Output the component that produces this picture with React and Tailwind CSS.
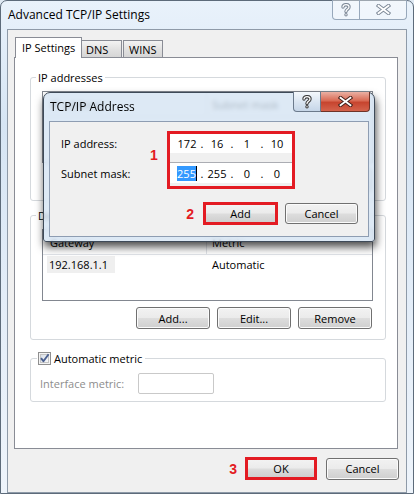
import React from "react";

const btnBg =
  "bg-[linear-gradient(180deg,#f2f2f2_0%,#ebebeb_48%,#dddddd_52%,#cfcfcf_100%)]";

function Btn({ children, className = "" }) {
  return (
    <div
      className={
        "flex items-center justify-center rounded-[3px] border border-[#707070] shadow-[inset_0_0_0_1px_#fbfbfb] " +
        btnBg +
        " " +
        className
      }
    >
      {children}
    </div>
  );
}

function RedBtn({ children, className = "" }) {
  return (
    <div
      className={
        "flex items-center justify-center border-[3px] border-[#e31b23] " +
        btnBg +
        " " +
        className
      }
    >
      {children}
    </div>
  );
}

function QGlyph({ dark }) {
  const outer = dark ? "#3b3b3b" : "#7e8a98";
  return (
    <svg width="10" height="14" viewBox="0 0 10 14">
      <path
        d="M2 4 C2 0.9 8 0.9 8 4 C8 6.4 5 6.2 5 8.6"
        fill="none"
        stroke={outer}
        strokeWidth="3.4"
        strokeLinecap="round"
      />
      <circle cx="5" cy="11.8" r="1.7" fill={outer} />
      <path
        d="M2 4 C2 0.9 8 0.9 8 4 C8 6.4 5 6.2 5 8.6"
        fill="none"
        stroke="#ffffff"
        strokeWidth="1.3"
        strokeLinecap="round"
      />
      <circle cx="5" cy="11.8" r="0.7" fill="#ffffff" />
    </svg>
  );
}

function XGlyph({ dark }) {
  const outer = dark ? "#43201a" : "#7e8a98";
  return (
    <svg width="15" height="11" viewBox="0 0 15 11">
      <path
        d="M2.5 1.8 L12.5 9.2 M12.5 1.8 L2.5 9.2"
        fill="none"
        stroke={outer}
        strokeWidth="3.8"
        strokeLinecap="square"
      />
      <path
        d="M2.5 1.8 L12.5 9.2 M12.5 1.8 L2.5 9.2"
        fill="none"
        stroke="#ffffff"
        strokeWidth="1.8"
        strokeLinecap="square"
      />
    </svg>
  );
}

function ListBox({ c1, c2, rows }) {
  return (
    <div className="ml-[11px] mt-[6px] flex h-[72px] w-[331px] flex-col border border-[#828790] bg-white">
      <div className="flex h-[25px] shrink-0 border-b border-[#e0e3e8]">
        <div className="flex w-[164px] items-center border-r border-[#e0e3e8] pl-[7px]">
          {c1}
        </div>
        <div className="flex items-center pl-[5px]">{c2}</div>
      </div>
      {rows}
    </div>
  );
}

function ButtonsRow() {
  return (
    <div className="mt-[6px] flex justify-end gap-[7px] pr-[13px]">
      <Btn className="h-[22px] w-[74px]">Add...</Btn>
      <Btn className="h-[22px] w-[74px]">Edit...</Btn>
      <Btn className="h-[22px] w-[74px]">Remove</Btn>
    </div>
  );
}

function Octets({ vals, selectFirst }) {
  return (
    <>
      {vals.map((v, i) => (
        <React.Fragment key={i}>
          {i > 0 && <span className="flex w-[6px] justify-center">.</span>}
          <span className="flex w-[24px] justify-center">
            {selectFirst && i === 0 ? (
              <span className="border-r border-black bg-[#3399ff] leading-[15px] text-white">
                {v}
              </span>
            ) : (
              v
            )}
          </span>
        </React.Fragment>
      ))}
    </>
  );
}

export default function App() {
  return (
    <div className="relative h-[494px] w-[414px] overflow-hidden bg-[#dfe9f3] font-['Open_Sans',sans-serif] text-[11px] leading-[15px] text-black">
      {/* Outer window */}
      <div className="flex h-[494px] w-[414px] flex-col rounded-t-[7px] border border-[#5d6b7a] bg-[linear-gradient(180deg,#e9f2fb_0%,#d6e5f4_25%,#e3edf8_60%,#eef4fb_100%)]">
        {/* title bar */}
        <div className="flex h-[28px] shrink-0">
          <div className="pl-[7px] pt-[6px] text-[12px] leading-[16px]">
            Advanced TCP/IP Settings
          </div>
          <div className="-mt-px ml-auto mr-[6px] flex h-[20px]">
            <div className="flex w-[28px] items-center justify-center rounded-bl-[4px] border border-t-0 border-[#97a8bb] bg-white/40">
              <QGlyph />
            </div>
            <div className="flex w-[47px] items-center justify-center rounded-br-[4px] border border-l-0 border-t-0 border-[#97a8bb] bg-white/40">
              <XGlyph />
            </div>
          </div>
        </div>

        {/* client */}
        <div className="mx-[6px] flex flex-1 flex-col border border-[#8e9aa8] bg-[#f0f0f0]">
          {/* tabs */}
          <div className="ml-[7px] mt-[7px] flex h-[20px] shrink-0 items-end">
            <div className="relative z-10 -mb-px flex h-[21px] w-[67px] items-start border border-b-0 border-[#898c95] bg-white pl-[6px] pt-[2px]">
              IP Settings
            </div>
            <div className="flex h-[17px] w-[40px] items-center border border-b-0 border-l-0 border-[#898c95] bg-[linear-gradient(180deg,#f3f3f3,#e2e2e2_50%,#d6d6d6)] pl-[4px]">
              DNS
            </div>
            <div className="ml-px flex h-[17px] w-[40px] items-center border border-b-0 border-[#898c95] bg-[linear-gradient(180deg,#f3f3f3,#e2e2e2_50%,#d6d6d6)] pl-[5px]">
              WINS
            </div>
          </div>

          {/* tab panel */}
          <div className="ml-[6px] flex h-[392px] w-[384px] shrink-0 flex-col border border-[#898c95] bg-white pl-[15px]">
            {/* group 1 */}
            <div className="mt-[19px] flex h-[124px] w-[356px] flex-col rounded-[3px] border border-[#d5d9dd]">
              <div className="-mt-[8px] ml-[5px] h-[15px] w-fit bg-white px-[2px]">
                IP addresses
              </div>
              <ListBox c1="IP address" c2="Subnet mask" rows={null} />
              <ButtonsRow />
            </div>

            {/* group 2 */}
            <div className="mt-[14px] flex h-[125px] w-[356px] flex-col rounded-[3px] border border-[#d5d9dd]">
              <div className="-mt-[8px] ml-[5px] h-[15px] w-fit bg-white px-[2px]">
                Default gateways:
              </div>
              <ListBox
                c1="Gateway"
                c2="Metric"
                rows={
                  <div className="mt-[1px] flex h-[17px] items-center">
                    <div className="w-[165px] pl-[4px]">
                      <span className="inline-block w-[68px] bg-[#efefef] pl-[2px] leading-[17px]">
                        192.168.1.1
                      </span>
                    </div>
                    <div className="pl-[4px]">Automatic</div>
                  </div>
                }
              />
              <ButtonsRow />
            </div>

            {/* group 3 */}
            <div className="mt-[18px] flex h-[44px] w-[356px] flex-col rounded-[3px] border border-[#d5d9dd]">
              <div className="-mt-[8px] ml-[6px] flex h-[15px] w-fit items-center gap-[3px] bg-white px-[1px] pr-[3px]">
                <svg width="13" height="13" viewBox="0 0 13 13">
                  <defs>
                    <linearGradient id="cb" x1="0" y1="0" x2="1" y2="1">
                      <stop offset="0" stopColor="#d6dde6" />
                      <stop offset="1" stopColor="#fbfbfb" />
                    </linearGradient>
                  </defs>
                  <rect x="0.5" y="0.5" width="12" height="12" fill="#f4f4f4" stroke="#8f8f8f" />
                  <rect x="2.5" y="2.5" width="8" height="8" fill="url(#cb)" stroke="#c4c4c4" />
                  <path
                    d="M3 6.2 L5.4 9.2 L10.6 2.2"
                    fill="none"
                    stroke="#4a5f8f"
                    strokeWidth="1.9"
                    strokeLinejoin="round"
                  />
                </svg>
                <span>Automatic metric</span>
              </div>
              <div className="mt-[7px] flex h-[21px] items-center pl-[9px]">
                <span className="w-[98px] text-[#8d8d8d]">Interface metric:</span>
                <div className="h-[21px] w-[76px] rounded-[2px] border border-[#c9c9c9] bg-white" />
              </div>
            </div>
          </div>

          {/* bottom buttons */}
          <div className="mt-[8px] flex items-center justify-end pr-[7px]">
            <div className="mr-[8px] font-['Liberation_Sans',sans-serif] text-[14px] font-bold leading-[16px] text-[#e31b23]">
              3
            </div>
            <RedBtn className="h-[23px] w-[72px]">OK</RedBtn>
            <Btn className="ml-[9px] h-[22px] w-[73px]">Cancel</Btn>
          </div>
        </div>
      </div>

      {/* TCP/IP Address dialog */}
      <div className="absolute left-[43px] top-[92px] flex h-[150px] w-[332px] flex-col rounded-b-[3px] rounded-t-[7px] border border-[#3e4a58] bg-[#d5e3f2]/80 shadow-[1px_5px_9px_rgba(0,0,0,0.7)] backdrop-blur-[2px]">
        <div className="flex h-[28px] shrink-0">
          <div className="pl-[6px] pt-[6px] text-[12px] leading-[16px]">TCP/IP Address</div>
          <div className="-mt-px ml-auto mr-[4px] flex h-[20px]">
            <div className="flex w-[28px] items-center justify-center rounded-bl-[4px] border border-t-0 border-[#6b7a8c] bg-[linear-gradient(180deg,#f4f8fc,#dbe6f2_50%,#c6d6e8)]">
              <QGlyph dark />
            </div>
            <div className="flex w-[49px] items-center justify-center rounded-br-[4px] border border-l-0 border-t-0 border-[#6e3328] bg-[linear-gradient(180deg,#eab0a3_0%,#d96b55_45%,#c7452f_55%,#d4634c_100%)]">
              <XGlyph dark />
            </div>
          </div>
        </div>
        <div className="mx-[5px] mb-[4px] flex-1 border border-[#8e9db2] bg-[#f0f0f0]">
          <div className="ml-[11px] mt-[9px] flex">
            <div className="flex h-[58px] w-[89px] flex-col">
              <div className="mt-[3px] h-[20px] leading-[20px]">IP address:</div>
              <div className="mt-[10px] h-[20px] leading-[20px]">Subnet mask:</div>
            </div>
            <div className="w-[17px] pt-[16px] font-['Liberation_Sans',sans-serif] text-[14px] font-bold leading-[16px] text-[#e31b23]">
              1
            </div>
            <div className="flex h-[58px] w-[128px] flex-col border-[3px] border-[#e31b23] bg-[#f0f0f0]">
              <div className="flex h-[19px] items-center bg-white pl-[5px]">
                <Octets vals={["172", "16", "1", "10"]} />
              </div>
              <div className="h-[10px] border-b border-[#abadb3]" />
              <div className="flex h-[20px] items-center bg-white pl-[5px]">
                <Octets vals={["255", "255", "0", "0"]} selectFirst />
              </div>
            </div>
          </div>
          <div className="mt-[13px] flex items-center justify-end pr-[10px]">
            <div className="mr-[9px] font-['Liberation_Sans',sans-serif] text-[14px] font-bold leading-[16px] text-[#e31b23]">
              2
            </div>
            <RedBtn className="h-[23px] w-[75px]">Add</RedBtn>
            <Btn className="ml-[7px] h-[21px] w-[73px]">Cancel</Btn>
          </div>
        </div>
      </div>
    </div>
  );
}
